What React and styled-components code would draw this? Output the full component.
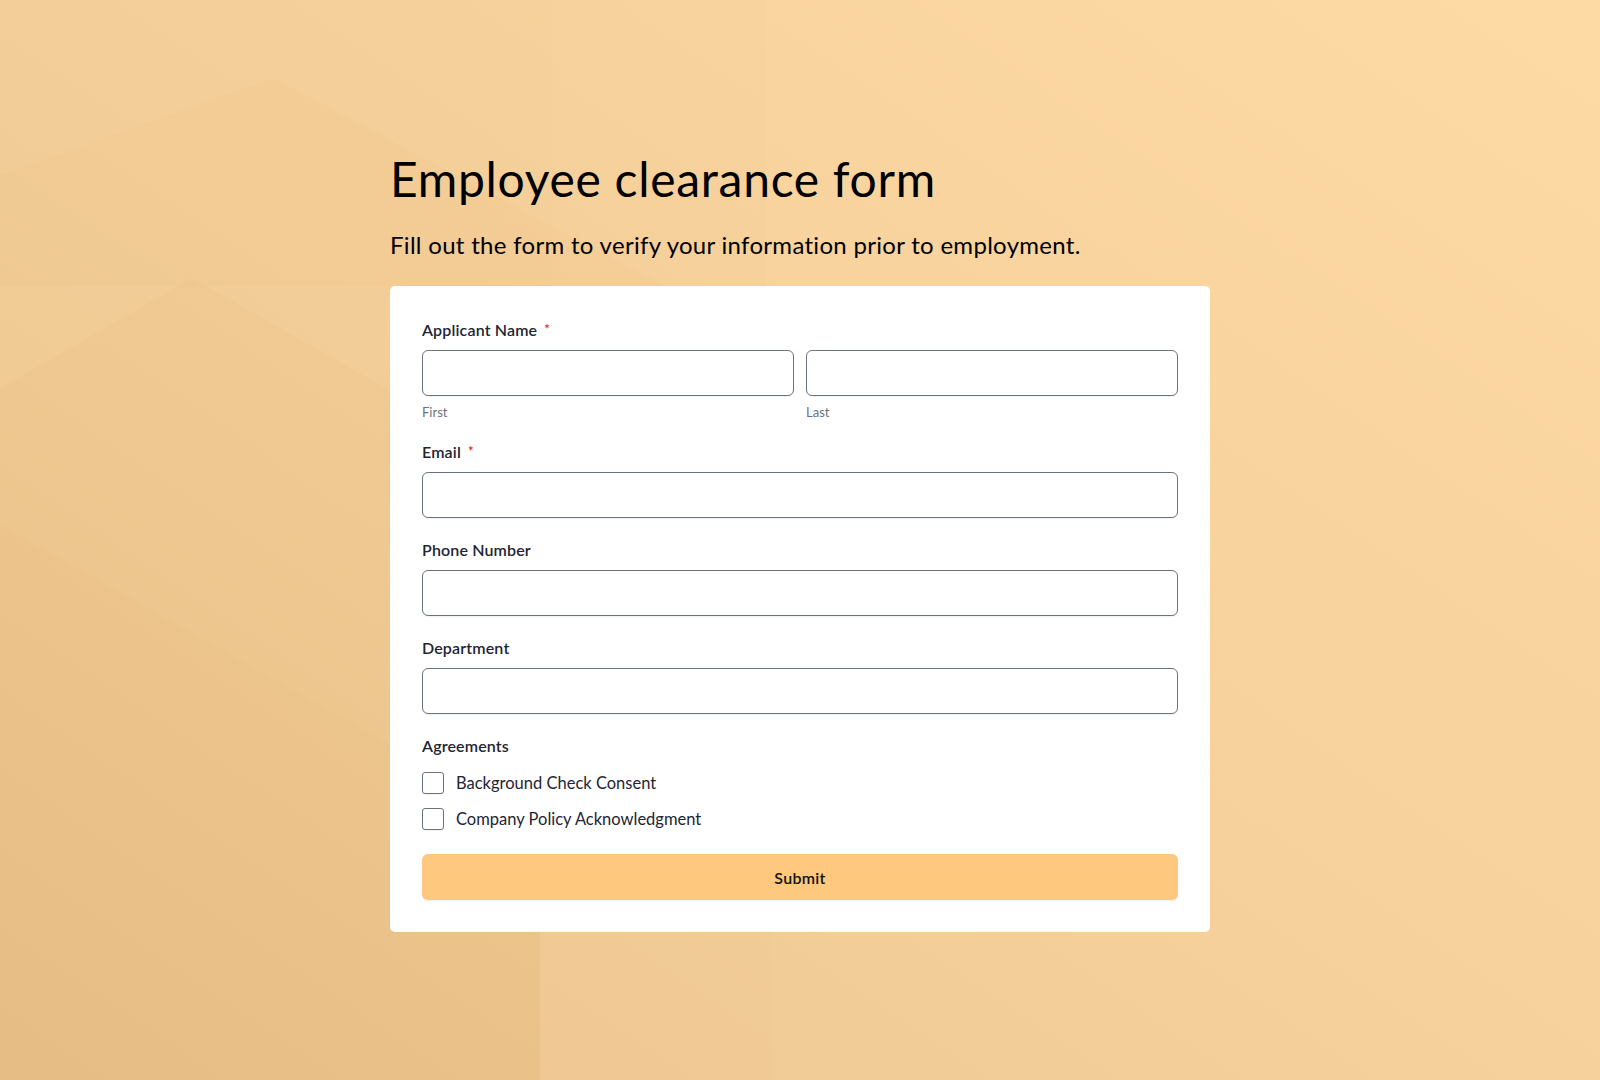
import React from 'react';
import styled, { createGlobalStyle } from 'styled-components';

// faint geometric backdrop, drawn once and used as the page background
const bgSvg = `<svg xmlns="http://www.w3.org/2000/svg" width="1600" height="1080" viewBox="0 0 1600 1080" preserveAspectRatio="none">
<defs><linearGradient id="g" x1="0" y1="1" x2="1" y2="0">
<stop offset="0" stop-color="#ecc690"/><stop offset="0.5" stop-color="#f6d19c"/><stop offset="1" stop-color="#fdd9a3"/>
</linearGradient></defs>
<rect width="1600" height="1080" fill="url(#g)"/>
<g fill="#9a5a10">
<polygon points="0,175 273,78 665,286 665,930 540,930 540,1080 0,1080" opacity="0.022"/>
<polygon points="0,388 192,278 400,396 400,930 540,930 540,1080 0,1080" opacity="0.022"/>
<polygon points="0,525 400,750 400,930 540,930 540,1080 0,1080" opacity="0.02"/>
<rect x="0" y="0" width="553" height="286" opacity="0.02"/>
<rect x="553" y="0" width="213" height="286" opacity="0.012"/>
<rect x="540" y="932" width="231" height="148" opacity="0.01"/>
</g>
</svg>`;

const GlobalStyle = createGlobalStyle`
  html, body {
    margin: 0;
    padding: 0;
  }
  body {
    min-height: 1080px;
    font-family: 'Lato', 'Noto Sans', sans-serif;
    background-color: #f4cf99;
    background-image: url("data:image/svg+xml;charset=utf-8,${encodeURIComponent(bgSvg)}");
    background-size: 100% 100%;
    background-repeat: no-repeat;
  }
`;

const Page = styled.div`
  width: 820px;
  margin: 0 auto;
  padding-top: 151px;
  padding-bottom: 148px;
`;

const Title = styled.h1`
  margin: 0;
  font-family: 'Lato', sans-serif;
  font-weight: 400;
  font-size: 48px;
  letter-spacing: 0.7px;
  line-height: 55px;
  color: #000;
`;

const Subtitle = styled.p`
  margin: 23px 0 25px;
  font-family: 'Lato', sans-serif;
  font-size: 24px;
  letter-spacing: 0.3px;
  line-height: 32px;
  color: #000;
`;

const Card = styled.form`
  background: #fff;
  border-radius: 5px;
  padding: 32px;
  display: flex;
  flex-direction: column;
  gap: 20px;
`;

const Field = styled.div`
  display: flex;
  flex-direction: column;
`;

const Label = styled.label`
  display: block;
  height: 24px;
  font-size: 16px;
  font-weight: 600;
  letter-spacing: 0.15px;
  line-height: 24px;
  color: #1e2533;
  margin-bottom: 8px;
`;

const Required = styled.span`
  color: #dc2626;
  font-size: 13px;
  line-height: 0;
  margin-left: 7px;
  vertical-align: 2px;
`;

const NameRow = styled.div`
  display: grid;
  grid-template-columns: 1fr 1fr;
  gap: 12px;
`;

const Input = styled.input`
  box-sizing: border-box;
  width: 100%;
  height: 46px;
  border: 1px solid #6b7280;
  border-radius: 6px;
  background: #fff;
  box-shadow: 0 1px 2px rgba(0, 0, 0, 0.06);
  font-family: inherit;
  font-size: 16px;
  padding: 0 12px;
  outline: none;
`;

const SubLabel = styled.span`
  display: block;
  margin-top: 8px;
  font-size: 13px;
  line-height: 16px;
  color: #6b7280;
`;

const CheckList = styled.div`
  display: flex;
  flex-direction: column;
  gap: 12px;
  margin-top: 5px;
  margin-bottom: 3px;
`;

const CheckRow = styled.label`
  display: flex;
  align-items: center;
  gap: 12px;
  height: 24px;
  font-size: 16.5px;
  color: #1e2533;
`;

const Box = styled.input.attrs({ type: 'checkbox' })`
  appearance: none;
  margin: 0;
  width: 22px;
  height: 22px;
  border: 1px solid #6b7280;
  border-radius: 3px;
  background: #fff;
  box-shadow: 0 1px 2px rgba(0, 0, 0, 0.06);
`;

const Submit = styled.button`
  height: 46px;
  border: none;
  border-radius: 6px;
  background: #fec87e;
  box-shadow: 0 1px 2px rgba(0, 0, 0, 0.08);
  font-family: 'Lato', sans-serif;
  font-size: 16px;
  font-weight: 600;
  letter-spacing: 0.3px;
  color: #111;
  cursor: pointer;
`;

export default function App() {
  return (
    <>
      <GlobalStyle />
      <Page>
        <Title>Employee clearance form</Title>
        <Subtitle>Fill out the form to verify your information prior to employment.</Subtitle>
        <Card onSubmit={(e) => e.preventDefault()}>
          <Field>
            <Label>
              Applicant Name<Required>*</Required>
            </Label>
            <NameRow>
              <div>
                <Input type="text" />
                <SubLabel>First</SubLabel>
              </div>
              <div>
                <Input type="text" />
                <SubLabel>Last</SubLabel>
              </div>
            </NameRow>
          </Field>
          <Field>
            <Label>
              Email<Required>*</Required>
            </Label>
            <Input type="email" />
          </Field>
          <Field>
            <Label>Phone Number</Label>
            <Input type="tel" />
          </Field>
          <Field>
            <Label>Department</Label>
            <Input type="text" />
          </Field>
          <Field>
            <Label>Agreements</Label>
            <CheckList>
              <CheckRow>
                <Box />
                Background Check Consent
              </CheckRow>
              <CheckRow>
                <Box />
                Company Policy Acknowledgment
              </CheckRow>
            </CheckList>
          </Field>
          <Submit type="submit">Submit</Submit>
        </Card>
      </Page>
    </>
  );
}
